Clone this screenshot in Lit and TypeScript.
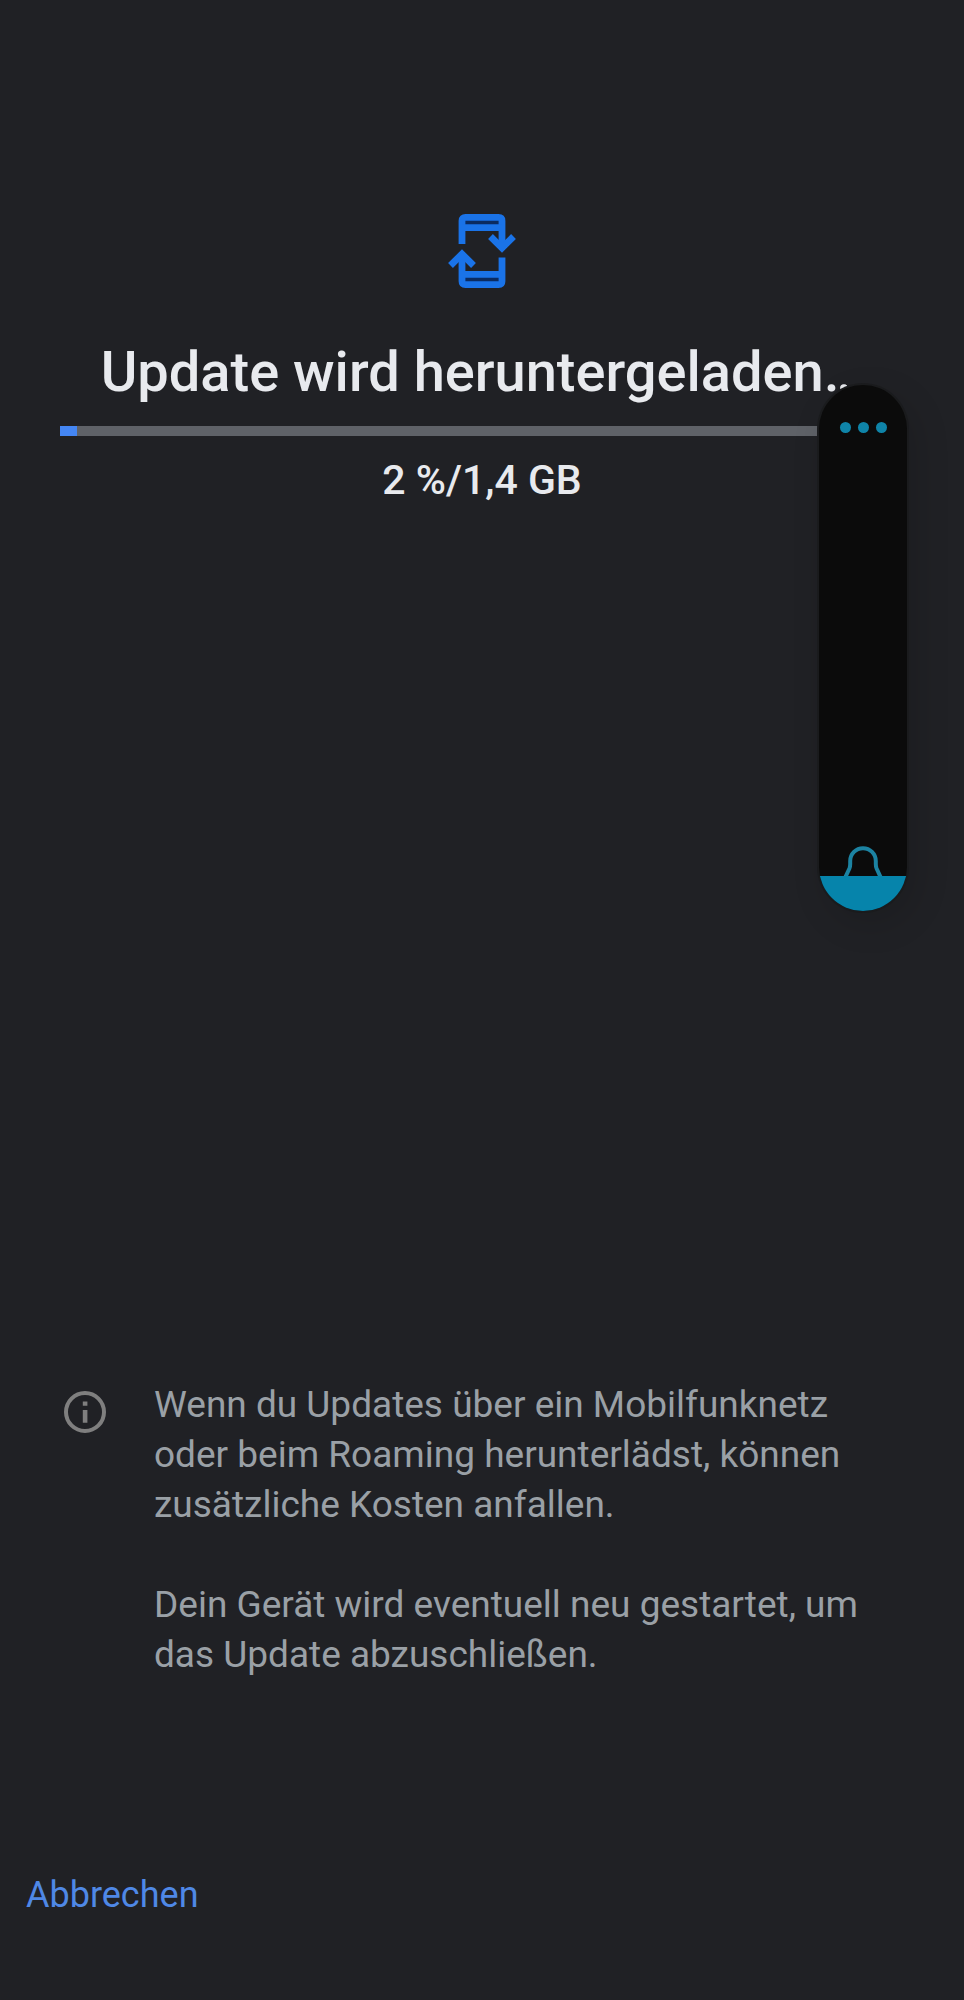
import { LitElement, html, css } from "lit";
import { customElement, property, state } from "lit/decorators.js";

@customElement("volume-panel")
class VolumePanel extends LitElement {
  @state() level = 6;

  static styles = css`
    :host {
      display: flex;
      flex-direction: column;
      box-sizing: border-box;
      width: 88px;
      height: 526px;
      border-radius: 44px;
      overflow: hidden;
      background: #0b0b0b;
      box-shadow: 0 0 0 2px #1a1b1d, 8px 12px 36px rgba(0, 0, 0, 0.14);
      position: relative;
    }
    .more {
      display: flex;
      justify-content: center;
      align-items: center;
      gap: 7px;
      height: 84px;
      padding: 0;
      border: 0;
      background: none;
    }
    .dot {
      width: 11px;
      height: 11px;
      border-radius: 50%;
      background: #0f84a8;
    }
    .level {
      appearance: none;
      writing-mode: vertical-lr;
      direction: rtl;
      flex: 1;
      width: 100%;
      margin: 0;
      background: none;
    }
    .level::-webkit-slider-thumb {
      appearance: none;
      width: 88px;
      height: 1px;
      background: none;
    }
    .fill {
      position: absolute;
      inset: auto 0 0 0;
      background: #0684ab;
      pointer-events: none;
    }
    .bell {
      position: absolute;
      left: 24px;
      bottom: 35px;
      width: 40px;
      height: 32px;
      pointer-events: none;
    }
  `;

  render() {
    return html`
      <button class="more" aria-label="Weitere Optionen">
        <span class="dot"></span><span class="dot"></span><span class="dot"></span>
      </button>
      <input
        class="level"
        type="range"
        min="0"
        max="100"
        aria-label="Klingeltonlautstärke"
        .value=${String(this.level)}
        @input=${(e: Event) => (this.level = Number((e.target as HTMLInputElement).value))}
      />
      <div class="fill" style="height:${(this.level / 90) * 100}%"></div>
      <svg class="bell" viewBox="0 0 40 32" fill="none" stroke="#1c83a2" stroke-width="4" aria-hidden="true">
        <path d="M2 34 L6.4 24.5 Q7.2 22.5 7.2 20 V17 A12.8 12.8 0 0 1 32.8 17 V20 Q32.8 22.5 33.6 24.5 L38 34" />
      </svg>
    `;
  }
}

@customElement("app-root")
class AppRoot extends LitElement {
  @property({ type: Number }) progress = 2;

  static styles = css`
    :host {
      display: block;
      position: relative;
      background: #202125;
      color: #e8eaee;
      font-family: Roboto, "Noto Sans", sans-serif;
    }
    .screen {
      display: flex;
      flex-direction: column;
      box-sizing: border-box;
      min-height: 100vh;
      padding: 214px 60px 70px;
    }
    .head {
      display: flex;
      flex-direction: column;
      align-items: center;
      text-align: center;
    }
    .sync {
      width: 68px;
      height: 74px;
    }
    .title {
      margin: 48px 0 0;
      font-size: 56px;
      font-weight: 500;
      line-height: 72px;
      white-space: nowrap;
    }
    .track {
      width: 100%;
      height: 10px;
      margin-top: 18px;
      background: #5f6268;
    }
    .bar {
      height: 100%;
      background: #4486f4;
    }
    .amount {
      margin: 19px 0 0;
      font-size: 41px;
      font-weight: 500;
      line-height: 50px;
    }
    .note {
      display: flex;
      gap: 48px;
      margin-top: auto;
      padding: 0 20px 0 4px;
      color: #9aa0a6;
      font-size: 37px;
      line-height: 50px;
    }
    .info {
      flex: none;
      width: 42px;
      height: 42px;
      margin-top: 11px;
    }
    .copy p {
      margin: 0 0 50px;
    }
    .copy p:last-child {
      margin: 0;
    }
    .actions {
      display: flex;
      margin: 180px 0 0 -34px;
    }
    .cancel {
      padding: 10px 0;
      border: 0;
      background: none;
      color: #4f88e6;
      font: inherit;
      font-size: 36px;
      line-height: 50px;
    }
    .volume {
      position: absolute;
      top: 385px;
      right: 57px;
    }
  `;

  render() {
    return html`
      <main class="screen">
        <header class="head">
          <svg class="sync" viewBox="0 0 68 74" fill="none" aria-hidden="true">
            <path fill="#0b2b60" d="M16 6H51V13H16ZM16 61H51V68H16Z" />
            <g stroke="#1a73e8" stroke-width="6.8">
              <path d="M14 30V6.7Q14 3.4 17.5 3.4H50.5Q54 3.4 54 6.7V32" />
              <path d="M54 43.5V67.3Q54 70.6 50.5 70.6H17.5Q14 70.6 14 67.3V42" />
              <path d="M14 13.7H54M14 60.3H54" />
              <path d="M42.5 22.5L54 34L65.5 22.5M2.5 51.5L14 40L25.5 51.5" />
            </g>
          </svg>
          <h1 class="title">Update wird heruntergeladen…</h1>
          <div class="track" role="progressbar" aria-label="Download" aria-valuenow=${this.progress}>
            <div class="bar" style="width:${this.progress}%"></div>
          </div>
          <p class="amount">${this.progress} %/1,4 GB</p>
        </header>
        <section class="note">
          <svg class="info" viewBox="0 0 42 42" aria-hidden="true">
            <circle cx="21" cy="21" r="19" fill="none" stroke="#7f7f7f" stroke-width="4" />
            <path fill="#7f7f7f" d="M18.8 10.5h4.6v4.2h-4.6zM18.8 19h4.6v12.8h-4.6z" />
          </svg>
          <div class="copy">
            <p>Wenn du Updates über ein Mobilfunknetz oder beim Roaming herunterlädst, können zusätzliche Kosten anfallen.</p>
            <p>Dein Gerät wird eventuell neu gestartet, um das Update abzuschließen.</p>
          </div>
        </section>
        <footer class="actions">
          <button class="cancel">Abbrechen</button>
        </footer>
      </main>
      <volume-panel class="volume"></volume-panel>
    `;
  }
}
